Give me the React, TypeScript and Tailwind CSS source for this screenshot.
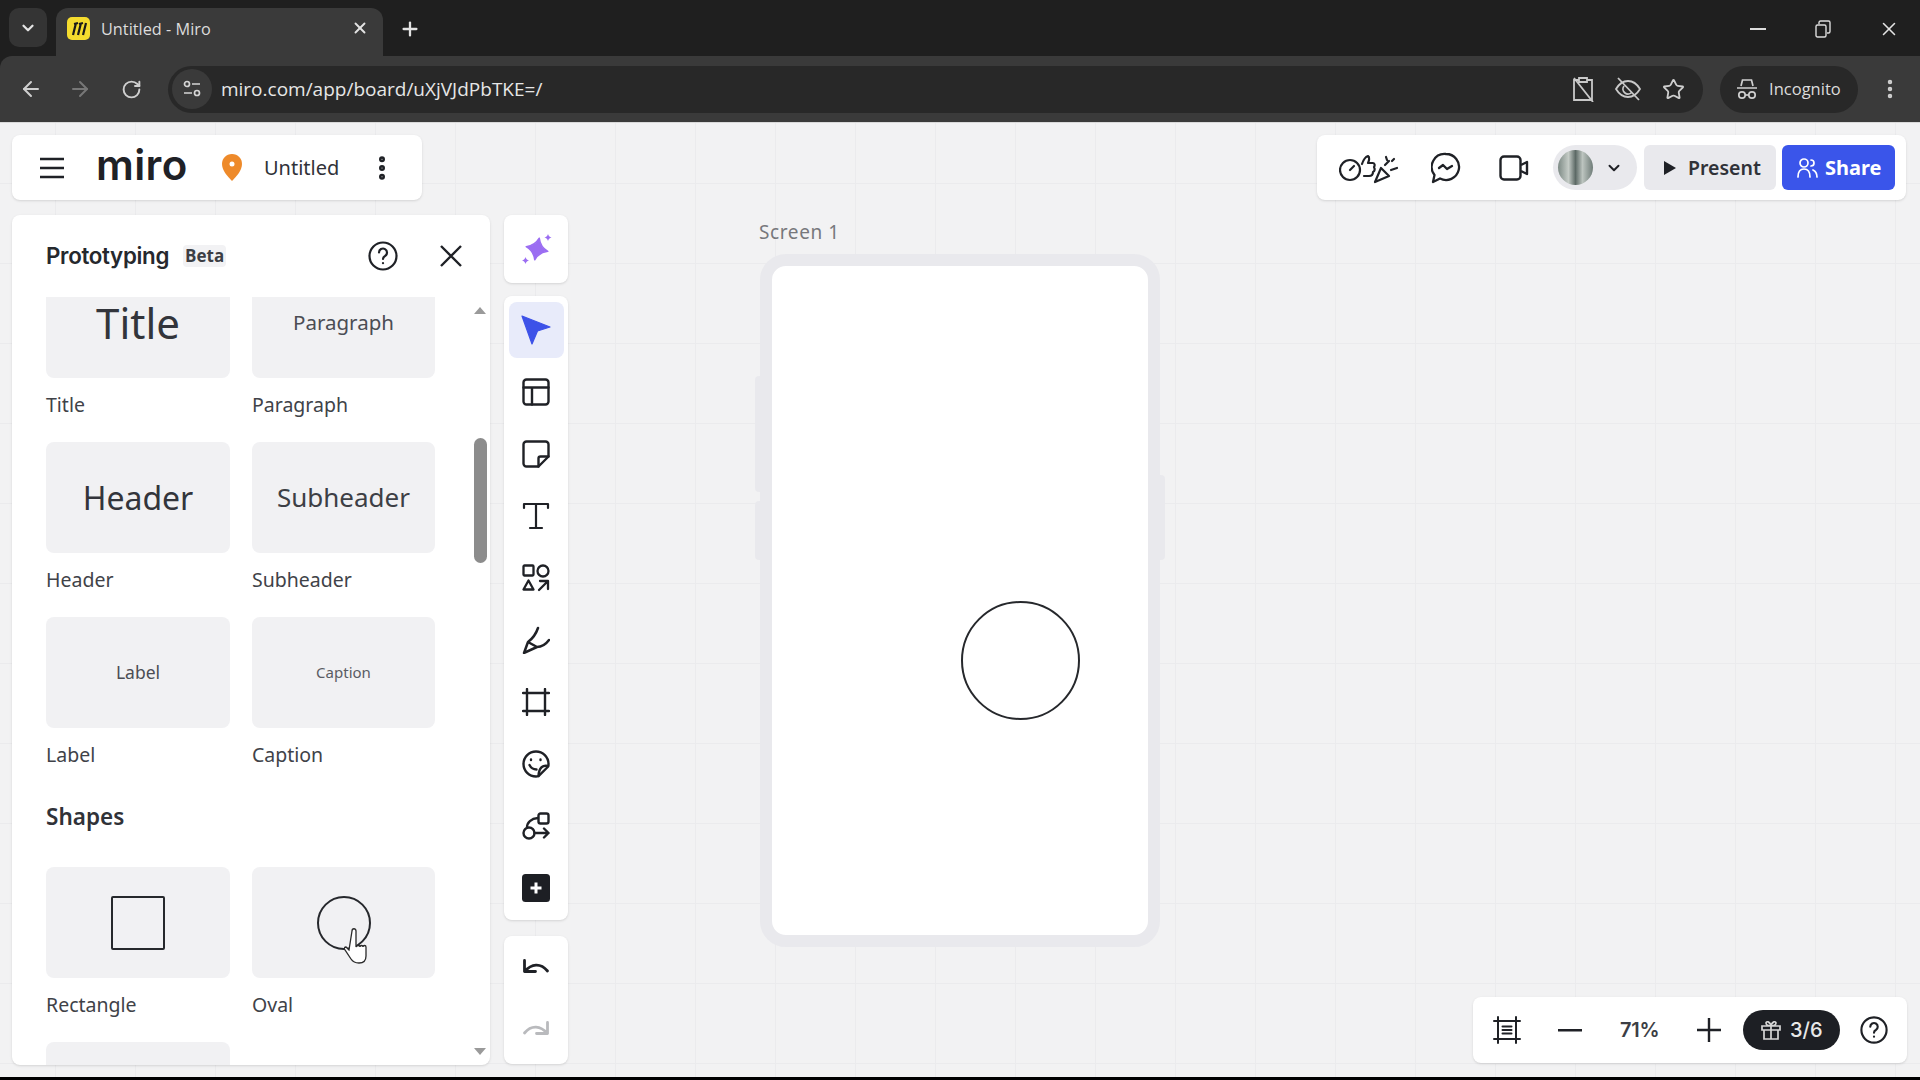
import type { ReactNode } from 'react';
import { ArrowLeft, ArrowRight, ChevronDown, EllipsisVertical, Plus, RotateCw, Star, X } from 'lucide-react';

const ink = '#1f2126';

function Icon({ w = 28, h = 28, vb, color = ink, sw = 2.4, children }: { w?: number; h?: number; vb?: string; color?: string; sw?: number; children: ReactNode }) {
    return (
        <svg width={w} height={h} viewBox={vb ?? `0 0 ${w} ${h}`} fill="none" stroke={color} strokeWidth={sw} strokeLinecap="round" strokeLinejoin="round">
            {children}
        </svg>
    );
}

const tools: ReactNode[] = [
    <svg key="select" width="30" height="32" viewBox="0 0 30 32"><polygon points="1,2 29,13 16.5,17 11,30" fill="#3d52e8" stroke="#3d52e8" strokeWidth="1.2" strokeLinejoin="round" /></svg>,
    <Icon key="template"><rect x="1.5" y="1.5" width="25" height="25" rx="3" /><path d="M1.5 9.5h25M10 9.5v17" /></Icon>,
    <Icon key="sticky"><path d="M4.5 1.5h19a3 3 0 0 1 3 3v12l-10 10h-12a3 3 0 0 1-3-3v-19a3 3 0 0 1 3-3z" /><path d="M26.5 16.5h-8a2 2 0 0 0-2 2v8" /></Icon>,
    <Icon key="text" sw={2.2}><path d="M2 6V2h24v4M14 2v24M8 26h12" /></Icon>,
    <Icon key="shapes" sw={2.3}><rect x="1.5" y="1.5" width="10" height="10" rx="1" /><circle cx="21" cy="7" r="5.5" /><path d="M6.5 16.5l5 9h-10zM17 26l9-9M18 17h8v8" /></Icon>,
    <Icon key="pen" sw={2.5}><path d="M2 27l4-11 9 5zM6 16c4-3 8-8 10-14M15 21c5 0 9-3 12-7" /></Icon>,
    <Icon key="frame" sw={2.4}><path d="M5 1v26M23 1v26M1 5h26M1 23h26" /></Icon>,
    <Icon key="sticker"><path d="M14 1.5A12.5 12.5 0 0 1 26.5 14c0 1-.1 1.8-.3 2.5l-9.7 9.7c-.8.2-1.6.3-2.5.3A12.5 12.5 0 0 1 14 1.5z" /><path d="M26 16c-5-1-9 1-9.5 10M9 9.5v.5M18.5 9.5v.5M7.500 15c1.500 3 4 4.500 7 4.500" /></Icon>,
    <Icon key="flow"><circle cx="7" cy="21" r="5.5" /><rect x="16.5" y="1.5" width="10" height="10" rx="2" /><path d="M5 15.500c0-5 4-9 11-9.500M12.500 21h14M22 16.500l4.500 4.500-4.500 4.500" /></Icon>,
    <svg key="plus" width="28" height="28" viewBox="0 0 28 28"><rect width="28" height="28" rx="3.5" fill="#1d1f24" /><path d="M14 8.500v11M8.500 14h11" stroke="#fff" strokeWidth="3" /></svg>,
];

const rows = [
    [
        { name: 'Title', body: <span className="text-[42px] text-[#33353b] leading-none">Title</span> },
        { name: 'Paragraph', body: <span className="text-[20.5px] text-[#4b4d54]">Paragraph</span> },
    ],
    [
        { name: 'Header', body: <span className="text-[32px] text-[#33353b]">Header</span> },
        { name: 'Subheader', body: <span className="text-[26px] text-[#3d3f45]">Subheader</span> },
    ],
    [
        { name: 'Label', body: <span className="text-[17.5px] text-[#4b4d54]">Label</span> },
        { name: 'Caption', body: <span className="text-[15px] text-[#5a5c63]">Caption</span> },
    ],
];

function PreviewCard({ name, children }: { name: string; children: ReactNode }) {
    return (
        <div className="mb-[25px]">
            <div className="h-[111px] rounded-lg bg-[#f1f1f3] flex items-center justify-center">{children}</div>
            <div className="mt-[15px] h-[24px] leading-[24px] text-[19.5px] text-[#404248]">{name}</div>
        </div>
    );
}

function Canvas() {
    return (
        <>
            <div className="absolute left-[759px] top-[95px] text-[19px] leading-[28px] tracking-[0.6px] text-[#77787c]">Screen 1</div>
            <div className="absolute left-[755px] top-[253px] w-[6px] h-[116px] rounded-l bg-[#e9e9ed]" />
            <div className="absolute left-[755px] top-[378px] w-[6px] h-[59px] rounded-l bg-[#e9e9ed]" />
            <div className="absolute left-[1159px] top-[352px] w-[6px] h-[85px] rounded-r bg-[#e9e9ed]" />
            <div className="absolute left-[760px] top-[131px] w-[400px] h-[693px] rounded-[26px] border-[12px] border-[#e9e9ed] bg-white" />
            <div className="absolute left-[961px] top-[478px] w-[119px] h-[119px] rounded-full border-2 border-[#26282c]" />
        </>
    );
}

function ChromeBars() {
    return (
        <>
            <div className="h-[56px] flex items-end pl-[9px] pr-[20px] shrink-0">
                <div className="w-[38px] h-[39px] mb-[9px] rounded-[10px] bg-[#343434] flex items-center justify-center text-[#e3e3e3]">
                    <ChevronDown size={18} strokeWidth={3} />
                </div>
                <div className="ml-[9px] w-[327px] h-[48px] rounded-t-[12px] bg-[#3a3a3a] flex items-center pl-[11px] pr-[14px]">
                    <svg width="23" height="23" viewBox="0 0 23 23" className="mb-[8px]">
                        <rect width="23" height="23" rx="5" fill="#f5dc2e" />
                        <path d="M6 18L9 6M11 18l3-12M16 18l3-12M7 7l4-1M12 7l4-1" stroke="#1b1b1b" strokeWidth="2.2" fill="none" />
                    </svg>
                    <span className="ml-[11px] mb-[6px] flex-1 text-[16.3px] text-[#dcdcdc] font-['Open_Sans',sans-serif]">Untitled - Miro</span>
                    <X size={18} strokeWidth={2.5} className="text-[#e3e3e3] mb-[8px]" />
                </div>
                <div className="ml-[16px] mb-[16px] text-[#e3e3e3]"><Plus size={22} strokeWidth={2.5} /></div>
                <div className="ml-auto mb-[16px] flex items-center text-[#e3e3e3]">
                    <svg width="16" height="2" className="mr-[49px]"><rect width="16" height="2" fill="#dcdcdc" /></svg>
                    <svg width="16" height="18" viewBox="0 0 16 18" fill="none" stroke="#dcdcdc" strokeWidth="1.4" className="mr-[47px]"><rect x="1" y="5" width="10" height="12" rx="1.5" /><path d="M4 4V2.500A1.500 1.500 0 0 1 5.500 1h8A1.500 1.500 0 0 1 15 2.500v9a1.500 1.500 0 0 1-1.500 1.500H12" /></svg>
                    <X size={22} strokeWidth={1.7} />
                </div>
            </div>
            <div className="h-[66px] bg-[#3a3a3a] rounded-tl-[12px] flex items-center pl-[19px] pr-[18px] text-[#cfcfcf] shrink-0">
                <ArrowLeft size={24} strokeWidth={2} />
                <ArrowRight size={24} strokeWidth={2} className="ml-[25px] text-[#777]" />
                <RotateCw size={21} strokeWidth={2.2} className="ml-[29px]" />
                <div className="ml-[26px] h-[47px] w-[1536px] rounded-full bg-[#282828] flex items-center pr-[18px]">
                    <div className="ml-[4px] w-[40px] h-[40px] rounded-full bg-[#3a3a3a] flex items-center justify-center">
                        <svg width="20" height="20" viewBox="0 0 20 20" fill="none" stroke="#d5d5d5" strokeWidth="1.7"><circle cx="5" cy="5" r="2.5" /><path d="M10 5h8M2 14h8" /><circle cx="15" cy="14" r="2.5" /></svg>
                    </div>
                    <span className="ml-[9px] flex-1 text-[19px] text-[#e6e6e6] font-['Open_Sans',sans-serif]">miro.com/app/board/uXjVJdPbTKE=/</span>
                    <svg width="22" height="26" viewBox="0 0 22 26" fill="none" stroke="#c9c9c9" strokeWidth="1.8"><path d="M7 4H2v20h18V4h-5M7 2h8v4H7zM2 2l19 24" /></svg>
                    <svg width="26" height="24" viewBox="0 0 26 24" fill="none" stroke="#c9c9c9" strokeWidth="1.8" className="ml-[21px]"><path d="M1 12c3-5 7-8 12-8s9 3 12 8c-3 5-7 8-12 8s-9-3-12-8zM9 9a5 5 0 0 0 8 6M3 1l21 22" /></svg>
                    <Star size={23} strokeWidth={1.9} className="ml-[21px] text-[#cfcfcf]" />
                </div>
                <div className="ml-[17px] h-[47px] w-[138px] rounded-full bg-[#282828] flex items-center pl-[16px]">
                    <svg width="22" height="22" viewBox="0 0 22 22" fill="none" stroke="#cfcfcf" strokeWidth="1.7"><path d="M5 8l1.500-6h9L17 8M1 10h20" /><circle cx="6" cy="17" r="3.2" /><circle cx="16" cy="17" r="3.2" /><path d="M9 17h4" /></svg>
                    <span className="ml-[11px] text-[16.5px] text-[#dcdcdc] font-['Open_Sans',sans-serif]">Incognito</span>
                </div>
                <EllipsisVertical size={24} strokeWidth={2.5} className="ml-[20px] text-[#cfcfcf]" />
            </div>
            <div className="h-px bg-[#d9d9d9] shrink-0" />
        </>
    );
}

export default function App() {
    return (
        <div className="w-[1920px] h-[1080px] overflow-hidden flex flex-col bg-[#1f1f1f] font-['Noto_Sans',sans-serif]">
            <ChromeBars />

            <main className="relative flex-1 min-h-0 flex flex-col pt-[12px] pb-[12px] pl-[12px] pr-[14px] bg-[#f2f2f3] bg-[linear-gradient(to_right,#ebebed_1px,transparent_1px),linear-gradient(to_bottom,#ebebed_1px,transparent_1px)] bg-[size:80px_80px] bg-[position:55px_60px]">
                <Canvas />

                <div className="relative flex justify-between h-[65px] shrink-0">
                    <div className="w-[410px] rounded-lg bg-white shadow-sm flex items-center pl-[28px] text-[#1f2126]">
                        <svg width="24" height="22" viewBox="0 0 24 22" fill="none" stroke={ink} strokeWidth="2.4"><path d="M0 2h24M0 11h24M0 20h24" /></svg>
                        <span className="ml-[32px] w-[92px] text-[42px] leading-none font-semibold font-['Inter',sans-serif] tracking-[0.4px] -mt-[5px]">miro</span>
                        <svg width="22" height="27" viewBox="0 0 22 27" className="ml-[33px]"><path d="M11 0c6 0 10 4.500 10 10 0 6-5 12-10 17C6 22 1 16 1 10 1 4.500 5 0 11 0z" fill="#ee8a2a" /><circle cx="11" cy="10" r="2.5" fill="#fff" /></svg>
                        <span className="ml-[21px] text-[20px] text-[#303238]">Untitled</span>
                        <EllipsisVertical size={30} strokeWidth={2.8} className="ml-[28px]" />
                    </div>
                    <div className="w-[589px] rounded-lg bg-white shadow-sm flex items-center pl-[22px] text-[#1f2126]">
                        <svg width="60" height="32" viewBox="0 0 60 32" fill="none" stroke={ink} strokeWidth="2.2" strokeLinecap="round" strokeLinejoin="round">
                            <circle cx="11" cy="18" r="10" /><path d="M11 18l4-4" />
                            <path d="M23 12c1-3 3-7 6-8 2 1 1 5 0 7h5c2 0 2 3 1 4 1 2 1 4-1 5 0 3-2 4-4 4h-5" />
                            <path d="M36 30l6-14 8 8zM46 13l4-4M52 18l6-2M47 5l1 3M55 7l-2 2" />
                        </svg>
                        <svg width="30" height="32" viewBox="0 0 30 32" fill="none" stroke={ink} strokeWidth="2.3" strokeLinecap="round" strokeLinejoin="round" className="ml-[32px]">
                            <path d="M15 2a13 13 0 1 1-6 24.500L2 30l1.500-7A13 13 0 0 1 15 2z" /><path d="M8 16l4-3 4 4 5-3" />
                        </svg>
                        <svg width="30" height="26" viewBox="0 0 30 26" fill="none" stroke={ink} strokeWidth="2.4" strokeLinejoin="round" className="ml-[38px]">
                            <rect x="1.5" y="1.5" width="20" height="23" rx="3.5" /><path d="M22 10l6-3v12l-6-3" />
                        </svg>
                        <div className="ml-[24px] w-[84px] h-[45px] rounded-full bg-[#e9e9ed] flex items-center pl-[5px] shrink-0">
                            <div className="w-[35px] h-[35px] rounded-full bg-[linear-gradient(90deg,#7d8a85,#c4cbc6_30%,#5d6a66_50%,#bcc4bf_70%,#6f7c78)]" />
                            <ChevronDown size={18} strokeWidth={2.6} className="ml-[12px]" />
                        </div>
                        <div className="ml-[7px] w-[132px] h-[45px] rounded-md bg-[#e9e9ed] flex items-center pl-[20px] shrink-0">
                            <svg width="12" height="14" viewBox="0 0 12 14"><path d="M0 0l12 7-12 7z" fill={ink} /></svg>
                            <span className="ml-[12px] text-[19.5px] font-semibold text-[#303238]">Present</span>
                        </div>
                        <div className="ml-[6px] w-[113px] h-[45px] rounded-md bg-[#3a55ea] flex items-center pl-[15px] text-white shrink-0">
                            <svg width="21" height="21" viewBox="0 0 21 21" fill="none" stroke="#fff" strokeWidth="1.7" strokeLinecap="round"><circle cx="7" cy="6" r="4" /><path d="M1 20c0-5 2-8 6-8s6 3 6 8M14 3a3 3 0 0 1 0 6M16 13c2 1 4 3 4 7" /></svg>
                            <span className="ml-[7px] text-[20px] font-bold">Share</span>
                        </div>
                    </div>
                </div>

                <div className="relative mt-[15px] flex gap-[14px] h-[850px] shrink-0">
                    <section className="w-[478px] rounded-lg bg-white shadow-sm flex flex-col">
                        <header className="h-[82px] shrink-0 flex items-center pl-[34px] pr-[28px]">
                            <span className="text-[22.3px] font-semibold text-[#26282d] font-['Inter',sans-serif] tracking-[-0.3px]">Prototyping</span>
                            <span className="ml-[14px] h-[22px] px-[2px] rounded bg-[#f2f2f4] text-[17px] leading-[22px] font-bold text-[#3c3e44] font-['Open_Sans',sans-serif]">Beta</span>
                            <svg width="30" height="30" viewBox="0 0 30 30" fill="none" stroke={ink} strokeWidth="2.2" strokeLinecap="round" className="ml-auto"><circle cx="15" cy="15" r="13.5" /><path d="M11 11.500a4 4 0 1 1 6 3.500c-1.500.8-2 1.500-2 3" /><path d="M15 22v.2" /></svg>
                            <svg width="22" height="22" viewBox="0 0 22 22" fill="none" stroke={ink} strokeWidth="2.4" className="ml-[42px]"><path d="M1 1l20 20M21 1L1 21" /></svg>
                        </header>

                        <div className="relative flex-1 min-h-0 overflow-hidden pl-[34px] rounded-b-lg">
                            <div className="-mt-[30px] w-[390px]">
                                {rows.map((row) => (
                                    <div key={row[0].name} className="grid grid-cols-[184px_183px] gap-x-[22px]">
                                        {row.map((item) => (
                                            <PreviewCard key={item.name} name={item.name}>{item.body}</PreviewCard>
                                        ))}
                                    </div>
                                ))}
                                <h3 className="h-[50px] mb-[25px] leading-[50px] text-[22.5px] font-semibold text-[#303238]">Shapes</h3>
                                <div className="grid grid-cols-[184px_183px] gap-x-[22px]">
                                    <PreviewCard name="Rectangle">
                                        <div className="w-[54px] h-[54px] rounded-[2px] border-[2.5px] border-[#26282c]" />
                                    </PreviewCard>
                                    <PreviewCard name="Oval">
                                        <div className="w-[54px] h-[54px] rounded-full border-[2.5px] border-[#26282c]" />
                                    </PreviewCard>
                                </div>
                                <div className="w-[184px] h-[111px] rounded-lg bg-[#f1f1f3]" />
                            </div>

                            {/* scrollbar */}
                            <div className="absolute right-[3px] top-0 bottom-0 w-[14px] flex flex-col items-center">
                                <div className="mt-[10px] w-0 h-0 border-x-[6px] border-x-transparent border-b-[7px] border-b-[#9a9a9a]" />
                                <div className="mt-[124px] w-[13px] h-[125px] rounded-full bg-[#8c8c8c]" />
                                <div className="mt-auto mb-[10px] w-0 h-0 border-x-[6px] border-x-transparent border-t-[7px] border-t-[#9a9a9a]" />
                            </div>

                            {/* cursor over the oval */}
                            <svg width="24" height="36" viewBox="0 0 24 36" className="absolute left-[332px] top-[631px]">
                                <path d="M5 22l-3-3c-2 0-2 2-1 3l6 9c2 3 5 4 8 4 5 0 7-3 7-7v-9c0-2-3-2-3 0 0-2-3-2-3 0 0-2-3-2-4 0V3c0-3-4-3-4 0z" fill="#fff" stroke="#2a2a2a" strokeWidth="1.3" />
                            </svg>
                        </div>
                    </section>

                    <div className="flex flex-col w-[64px]">
                        <div className="h-[68px] rounded-lg bg-white shadow-sm flex items-center justify-center">
                            <svg width="30" height="30" viewBox="0 0 30 30" fill="#9b6df2" className="ml-[2px]">
                                <path d="M15 4c2 6 5 9 11 11-6 2-9 5-11 11-2-6-5-9-11-11 6-2 9-5 11-11z" transform="rotate(12 15 15)" stroke="#9b6df2" strokeWidth="1.5" strokeLinejoin="round" />
                                <path d="M26 0c.5 2 1.500 3 3.500 3.500-2 .5-3 1.500-3.500 3.500-.5-2-1.500-3-3.500-3.500 2-.5 3-1.500 3.500-3.500zM3.500 23c.5 2 1.500 3 3.500 3.500-2 .5-3 1.500-3.500 3.500-.5-2-1.500-3-3.500-3.500 2-.5 3-1.500 3.500-3.500z" />
                            </svg>
                        </div>
                        <div className="mt-[13px] h-[624px] pt-[3px] rounded-lg bg-white shadow-sm flex flex-col">
                            {tools.map((tool, i) => (
                                <div key={i} className="h-[62px] flex items-center justify-center shrink-0">
                                    <div className={i === 0 ? 'w-[55px] h-[56px] rounded-lg bg-[#e8ebfa] flex items-center justify-center' : 'flex items-center justify-center'}>
                                        {tool}
                                    </div>
                                </div>
                            ))}
                        </div>
                        <div className="mt-[16px] h-[128px] rounded-lg bg-white shadow-sm flex flex-col items-center justify-center gap-[38px]">
                            <Icon h={24} sw={2.8}><path d="M2.500 3.500v11h11M2.500 14.500c7-8 16-9 23-.5" /></Icon>
                            <Icon h={24} color="#b9babd" sw={2.8}><path d="M25.500 3.500v11h-11M25.500 14.500c-7-8-16-9-23-.5" /></Icon>
                        </div>
                    </div>
                </div>

                {/* zoom bar */}
                <div className="absolute right-[13px] bottom-[14px] w-[434px] h-[66px] rounded-lg bg-white shadow-sm flex items-center pl-[20px] text-[#1f2126]">
                    <svg width="28" height="28" viewBox="0 0 28 28" fill="none" stroke={ink} strokeWidth="2.4" strokeLinecap="round"><path d="M5 1v26M23 1v26M1 5h26M1 23h26M9.500 10.500h9M9.500 14h9M9.500 17.500h9" strokeWidth="2" /></svg>
                    <svg width="24" height="3" className="ml-[37px]"><rect width="24" height="2.5" fill={ink} /></svg>
                    <span className="ml-[38px] w-[44px] text-[20px] font-semibold text-[#3c3e44] font-['Inter',sans-serif] tracking-[-0.3px]">71%</span>
                    <svg width="24" height="24" viewBox="0 0 24 24" fill="none" stroke={ink} strokeWidth="2.4" className="ml-[33px]"><path d="M12 0v24M0 12h24" /></svg>
                    <div className="ml-[22px] w-[97px] h-[40px] rounded-full bg-[#1d1f24] flex items-center pl-[18px] text-[#e8e8e8]">
                        <svg width="20" height="20" viewBox="0 0 20 20" fill="none" stroke="#d6d6d6" strokeWidth="1.7"><path d="M1 6h18v4H1zM3 10v9h14v-9M10 6v13M10 6C8 6 5 5 5 3s4-2 5 3c1-5 5-5 5-3s-3 3-5 3" /></svg>
                        <span className="ml-[9px] text-[20px] font-medium font-['Inter',sans-serif]">3/6</span>
                    </div>
                    <svg width="28" height="28" viewBox="0 0 30 30" fill="none" stroke={ink} strokeWidth="2.3" strokeLinecap="round" className="ml-[20px]"><circle cx="15" cy="15" r="13.5" /><path d="M11 11.500a4 4 0 1 1 6 3.500c-1.500.8-2 1.500-2 3" /><path d="M15 22v.2" /></svg>
                </div>
            </main>

            <div className="h-[3px] bg-black shrink-0" />
        </div>
    );
}
